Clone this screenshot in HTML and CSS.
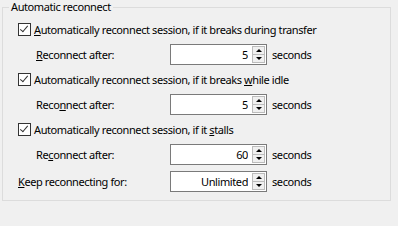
FILE: index.html
```html
<!DOCTYPE html>
<html lang="en">
<head>
    <meta charset="UTF-8">
    <title>Automatic reconnect</title>
    <link rel="stylesheet" href="styles.css">
</head>
<body>
    <fieldset class="group">
        <legend>Automatic reconnect</legend>

        <label class="row check">
            <span class="box checked"></span>
            <span><u>A</u>utomatically reconnect session, if it breaks during transfer</span>
        </label>
        <div class="row field">
            <span class="caption"><u>R</u>econnect after:</span>
            <div class="spin"><input type="text" value="5" readonly><span class="arrows"><i class="up"></i><i class="down"></i></span></div>
            <span class="unit">seconds</span>
        </div>

        <label class="row check">
            <span class="box checked"></span>
            <span>Automatically reconnect session, if it breaks <u>w</u>hile idle</span>
        </label>
        <div class="row field">
            <span class="caption">Reco<u>n</u>nect after:</span>
            <div class="spin"><input type="text" value="5" readonly><span class="arrows"><i class="up"></i><i class="down"></i></span></div>
            <span class="unit">seconds</span>
        </div>

        <label class="row check">
            <span class="box checked"></span>
            <span>Automatically reconnect session, if it <u>s</u>talls</span>
        </label>
        <div class="row field">
            <span class="caption">Re<u>c</u>onnect after:</span>
            <div class="spin"><input type="text" value="60" readonly><span class="arrows"><i class="up"></i><i class="down"></i></span></div>
            <span class="unit">seconds</span>
        </div>

        <div class="row field keep">
            <span class="caption"><u>K</u>eep reconnecting for:</span>
            <div class="spin"><input type="text" value="Unlimited" readonly><span class="arrows"><i class="up"></i><i class="down"></i></span></div>
            <span class="unit">seconds</span>
        </div>
    </fieldset>
</body>
</html>
```

FILE: styles.css
```css
body {
    margin: 0;
    background: #f0f0f0;
    color: #000;
    font-family: "Noto Sans", "Open Sans", sans-serif;
    font-size: 11px;
    letter-spacing: -0.4px;
}

.group {
    width: 389px;
    margin: 0 0 0 2px;
    padding: 4px 0 6px 0;
    border: 1px solid #dcdcdc;
    box-sizing: border-box;
}

.group legend {
    margin-left: 6px;
    padding: 0 2px;
    line-height: 14px;
}

.row {
    display: flex;
    align-items: center;
}

.row.check {
    height: 22px;
    padding-left: 15px;
}

.row.field {
    height: 28px;
    padding-left: 33px;
}

.row.field.keep {
    height: 26px;
    padding-left: 15px;
}

.box {
    width: 13px;
    height: 13px;
    margin-right: 3px;
    border: 1px solid #333;
    background: #fff;
    box-sizing: border-box;
    position: relative;
}

.box.checked::after {
    content: "";
    position: absolute;
    left: 3px;
    top: 0;
    width: 3px;
    height: 7px;
    border: solid #333;
    border-width: 0 1px 1px 0;
    transform: rotate(40deg);
}

.caption {
    width: 134px;
}

.keep .caption {
    width: 152px;
}

.spin {
    display: flex;
    width: 97px;
    height: 21px;
    border: 1px solid #7a7a7a;
    background: #fff;
    box-sizing: border-box;
}

.spin input {
    flex: 1;
    min-width: 0;
    border: none;
    padding: 0 4px 0 0;
    margin: 0;
    font: inherit;
    letter-spacing: inherit;
    text-align: right;
    background: transparent;
    outline: none;
}

.arrows {
    display: flex;
    flex-direction: column;
    width: 13px;
    margin: 1px 1px 1px 0;
}

.arrows i {
    flex: 1;
    border: 1px solid #bcbcbc;
    background: #f0f0f0;
    position: relative;
}

.arrows i.down {
    border-top: none;
}

.arrows i::after {
    content: "";
    position: absolute;
    left: 3px;
    border-left: 3px solid transparent;
    border-right: 3px solid transparent;
}

.arrows i.up::after {
    top: 2px;
    border-bottom: 3px solid #000;
}

.arrows i.down::after {
    top: 2px;
    border-top: 3px solid #000;
}

.unit {
    margin-left: 5px;
}
```
